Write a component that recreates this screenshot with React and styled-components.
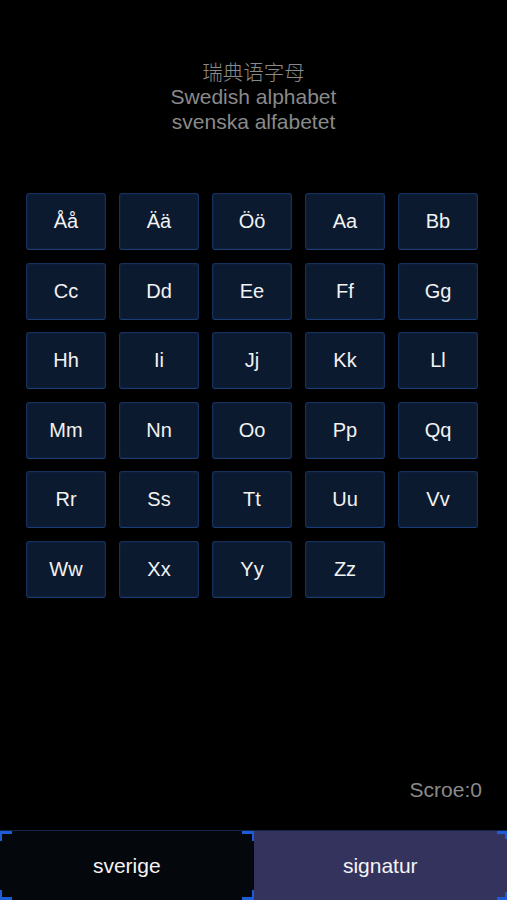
import React, { useState } from "react";
import styled, { createGlobalStyle, css } from "styled-components";

const GlobalStyle = createGlobalStyle`
  html, body {
    margin: 0;
    padding: 0;
    background: #000;
  }
  * {
    box-sizing: border-box;
  }
`;

const letters = [
  "Åå", "Ää", "Öö", "Aa", "Bb",
  "Cc", "Dd", "Ee", "Ff", "Gg",
  "Hh", "Ii", "Jj", "Kk", "Ll",
  "Mm", "Nn", "Oo", "Pp", "Qq",
  "Rr", "Ss", "Tt", "Uu", "Vv",
  "Ww", "Xx", "Yy", "Zz",
];

const Screen = styled.div`
  width: 507px;
  height: 900px;
  background: #000;
  display: flex;
  flex-direction: column;
  font-family: "Liberation Sans", "Noto Sans CJK SC", Arial, sans-serif;
  overflow: hidden;
`;

const Header = styled.div`
  padding-top: 59px;
  display: flex;
  flex-direction: column;
  align-items: center;
  color: #8a8a8a;
  line-height: 25px;
`;

const HeaderLine = styled.div`
  font-family: ${({ cjk }) =>
    cjk
      ? `"Noto Sans CJK SC", sans-serif`
      : `"Liberation Sans", Arial, sans-serif`};
  font-size: ${({ cjk }) => (cjk ? "20.5px" : "21px")};
  font-weight: ${({ cjk }) => (cjk ? 300 : 400)};
`;

const Grid = styled.div`
  margin-top: 59px;
  padding-left: 26px;
  display: grid;
  grid-template-columns: repeat(5, 80px);
  grid-auto-rows: 57px;
  column-gap: 13px;
  row-gap: 12.6px;
`;

const LetterButton = styled.button`
  margin: 0;
  padding: 0;
  background: #0c1a30;
  border: 1px solid #16305c;
  border-bottom-color: #1c3c74;
  border-radius: 3px;
  box-shadow: inset 0 0 2px rgba(40, 80, 160, 0.35);
  color: #f2f2f2;
  font-family: "Liberation Sans", Arial, sans-serif;
  font-size: 20px;
  display: flex;
  align-items: center;
  justify-content: center;
  cursor: pointer;
`;

const Spacer = styled.div`
  flex: 1;
`;

const Score = styled.div`
  align-self: flex-end;
  padding-right: 25px;
  margin-bottom: 29px;
  color: #8a8a8a;
  font-size: 21px;
  line-height: 22px;
`;

const TabBar = styled.div`
  height: 70px;
  display: flex;
`;

const corner = "#1e5bd6";

const Tab = styled.button`
  flex: 1;
  margin: 0;
  padding: 0;
  border: none;
  border-top: 1px solid #10254a;
  color: #f4f4f4;
  font-family: "Liberation Sans", Arial, sans-serif;
  font-size: 21px;
  display: flex;
  align-items: center;
  justify-content: center;
  cursor: pointer;
  background-repeat: no-repeat;
  ${({ active }) =>
    active
      ? css`
          background-color: #04070c;
          background-image:
            linear-gradient(${corner}, ${corner}),
            linear-gradient(${corner}, ${corner}),
            linear-gradient(${corner}, ${corner}),
            linear-gradient(${corner}, ${corner}),
            linear-gradient(${corner}, ${corner}),
            linear-gradient(${corner}, ${corner}),
            linear-gradient(${corner}, ${corner}),
            linear-gradient(${corner}, ${corner});
          background-size:
            12px 3px, 2px 10px,
            12px 3px, 2px 10px,
            12px 3px, 2px 10px,
            12px 3px, 2px 10px;
          background-position:
            left top, left top,
            right top, right top,
            left bottom, left bottom,
            right bottom, right bottom;
        `
      : css`
          background-color: #34335e;
          background-image:
            linear-gradient(${corner}, ${corner}),
            linear-gradient(${corner}, ${corner}),
            linear-gradient(${corner}, ${corner}),
            linear-gradient(${corner}, ${corner});
          background-size: 10px 3px, 2px 8px, 10px 3px, 2px 8px;
          background-position: right top, right top, right bottom, right bottom;
        `}
`;

export default function App() {
  const [tab, setTab] = useState("sverige");
  const [score] = useState(0);

  return (
    <>
      <GlobalStyle />
      <Screen>
        <Header>
          <HeaderLine cjk>瑞典语字母</HeaderLine>
          <HeaderLine>Swedish alphabet</HeaderLine>
          <HeaderLine>svenska alfabetet</HeaderLine>
        </Header>
        <Grid>
          {letters.map((l) => (
            <LetterButton key={l}>{l}</LetterButton>
          ))}
        </Grid>
        <Spacer />
        <Score>Scroe:{score}</Score>
        <TabBar>
          <Tab active={tab === "sverige"} onClick={() => setTab("sverige")}>
            sverige
          </Tab>
          <Tab active={tab === "signatur"} onClick={() => setTab("signatur")}>
            signatur
          </Tab>
        </TabBar>
      </Screen>
    </>
  );
}
